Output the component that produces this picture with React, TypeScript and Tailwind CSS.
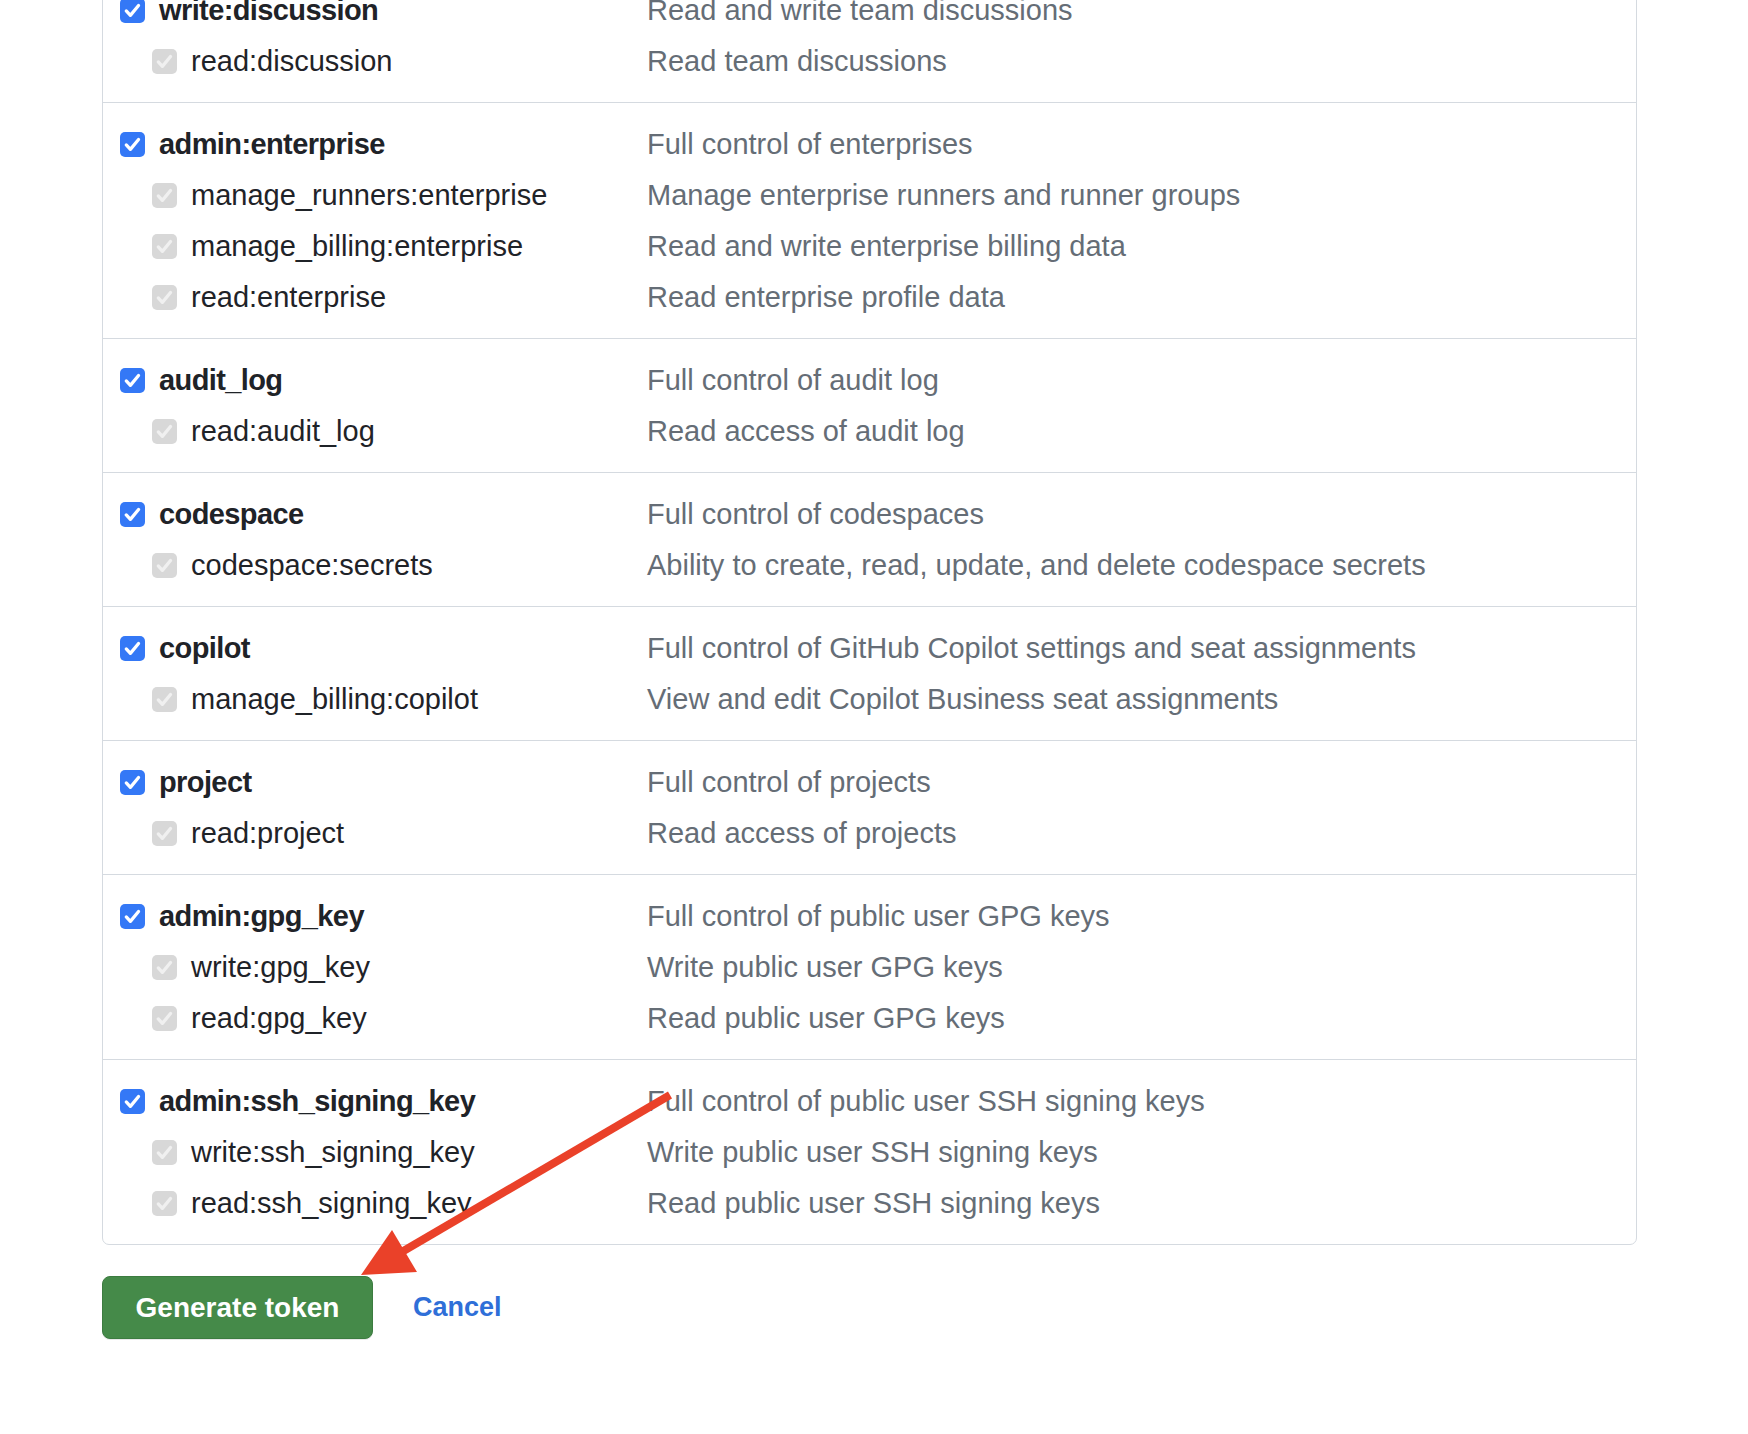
import React from "react"

type Scope = [string, string]

const GROUPS: Scope[][] = [
  [
    ["write:discussion", "Read and write team discussions"],
    ["read:discussion", "Read team discussions"],
  ],
  [
    ["admin:enterprise", "Full control of enterprises"],
    ["manage_runners:enterprise", "Manage enterprise runners and runner groups"],
    ["manage_billing:enterprise", "Read and write enterprise billing data"],
    ["read:enterprise", "Read enterprise profile data"],
  ],
  [
    ["audit_log", "Full control of audit log"],
    ["read:audit_log", "Read access of audit log"],
  ],
  [
    ["codespace", "Full control of codespaces"],
    ["codespace:secrets", "Ability to create, read, update, and delete codespace secrets"],
  ],
  [
    ["copilot", "Full control of GitHub Copilot settings and seat assignments"],
    ["manage_billing:copilot", "View and edit Copilot Business seat assignments"],
  ],
  [
    ["project", "Full control of projects"],
    ["read:project", "Read access of projects"],
  ],
  [
    ["admin:gpg_key", "Full control of public user GPG keys"],
    ["write:gpg_key", "Write public user GPG keys"],
    ["read:gpg_key", "Read public user GPG keys"],
  ],
  [
    ["admin:ssh_signing_key", "Full control of public user SSH signing keys"],
    ["write:ssh_signing_key", "Write public user SSH signing keys"],
    ["read:ssh_signing_key", "Read public user SSH signing keys"],
  ],
]

function Check({ disabled }: { disabled?: boolean }) {
  return (
    <span
      className={
        "flex h-[25px] w-[25px] shrink-0 items-center justify-center rounded-[5px] " +
        (disabled ? "bg-[#d8d8d8]" : "bg-[#3478f6]")
      }
    >
      <svg viewBox="0 0 24 24" className="h-[23px] w-[23px]" fill="none">
        <path
          d="M5.5 12.5l4.3 4.6L18.3 6.8"
          stroke={disabled ? "#f0f0f0" : "#ffffff"}
          strokeWidth="3.4"
          strokeLinecap="round"
          strokeLinejoin="round"
        />
      </svg>
    </span>
  )
}

function ScopeRow({ name, desc, child }: { name: string; desc: string; child: boolean }) {
  return (
    <div className="grid h-[51px] grid-cols-[527px_1fr] items-center">
      <label className={"flex items-center gap-[14px] " + (child ? "pl-[32px]" : "")}>
        <Check disabled={child} />
        {child ? (
          <span className="text-[#1f2328]">{name}</span>
        ) : (
          <span className="font-bold tracking-[-0.6px] text-[#1f2328]">{name}</span>
        )}
      </label>
      <span className="text-[#656d76]">{desc}</span>
    </div>
  )
}

export default function App() {
  return (
    <div
      className="relative h-[1434px] w-full overflow-hidden bg-white text-[29px] leading-none"
      style={{ fontFamily: '"Liberation Sans", Arial, sans-serif' }}
    >
      {/* scopes table, scrolled so its top is out of view */}
      <div className="-mt-[32px] ml-[102px] w-[1535px] rounded-[7px] border border-[#d5dae0]">
        {GROUPS.map((group, gi) => (
          <div key={gi} className={"pl-[17px] pt-[16px] pb-[15px] " + (gi > 0 ? "border-t border-[#d5dae0]" : "")}>
            {group.map(([name, desc], i) => (
              <ScopeRow key={name} name={name} desc={desc} child={i > 0} />
            ))}
          </div>
        ))}
      </div>

      <div className="ml-[102px] mt-[31px] flex items-center gap-[40px]">
        <button className="flex h-[63px] w-[271px] items-center justify-center rounded-[8px] border border-[#3c7c40] bg-[#458a49] text-[28px] font-bold text-white shadow-[0_1px_0_rgba(31,35,40,0.1)]">
          Generate token
        </button>
        <a className="text-[27px] font-bold text-[#2f6fd8]">Cancel</a>
      </div>

      {/* annotation arrow */}
      <svg
        className="pointer-events-none absolute left-0 top-0"
        width="1748"
        height="1434"
        viewBox="0 0 1748 1434"
      >
        <line x1="670" y1="1095" x2="400" y2="1253" stroke="#ea4129" strokeWidth="8" />
        <polygon points="361,1275 392,1230 417,1272" fill="#ea4129" />
      </svg>
    </div>
  )
}
